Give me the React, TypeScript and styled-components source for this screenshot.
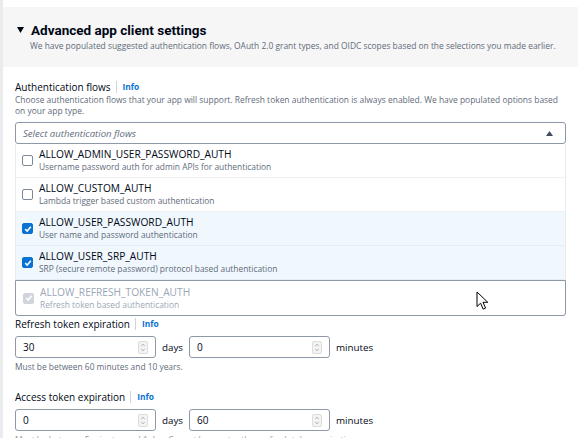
import React from "react";
import styled, { createGlobalStyle } from "styled-components";

const GlobalStyle = createGlobalStyle`
  body {
    margin: 0;
    background: #ffffff;
    font-family: "Open Sans", "Liberation Sans", sans-serif;
    color: #000716;
  }
`;

const Page = styled.div`
  position: relative;
  box-sizing: border-box;
  width: 578px;
  height: 438px;
  overflow: hidden;
  padding-top: 7px;
  border-left: 3px solid #e9ebed;
  background: #ffffff;
`;

const SectionHeader = styled.div`
  box-sizing: border-box;
  height: 60px;
  padding: 14px 0 0 14px;
  background: #f6f6f6;
`;

const HeaderTitle = styled.h2`
  display: flex;
  align-items: center;
  gap: 7px;
  margin: 0;
  font-family: Roboto, "Open Sans", sans-serif;
  font-size: 13.5px;
  line-height: 18px;
  font-weight: 700;
  color: #000716;
`;

const Caret = styled.svg`
  width: 7px;
  height: 6px;
  fill: #000716;
`;

const HeaderDescription = styled.p`
  margin: 1px 0 0 13px;
  font-size: 8.42px;
  line-height: 12px;
  color: #5f6b7a;
`;

const Body = styled.div`
  padding: 13px 12px 0 12px;
`;

const Label = styled.div<{ $gap?: number }>`
  display: flex;
  align-items: center;
  margin-top: ${(p) => p.$gap ?? 0}px;
  font-size: 10px;
  line-height: 14px;
  color: #000716;
`;

const Divider = styled.span`
  width: 1px;
  height: 12px;
  margin: 0 6px 0 5px;
  background: #d1d5db;
`;

const InfoLink = styled.a`
  font-size: 8.4px;
  font-weight: 700;
  color: #0972d3;
  text-decoration: none;
`;

const Description = styled.p`
  margin: 0;
  font-size: 8.45px;
  line-height: 11px;
  color: #5f6b7a;
`;

const Select = styled.div`
  box-sizing: border-box;
  display: flex;
  align-items: center;
  justify-content: space-between;
  height: 22px;
  margin-top: 6px;
  padding: 0 12px 0 7px;
  border: 1px solid #8d99a8;
  border-radius: 3px;
  font-size: 9.6px;
  font-style: italic;
  color: #5f6b7a;
`;

const UpArrow = styled.svg`
  width: 7px;
  height: 5px;
  fill: #414d5c;
`;

const OptionList = styled.ul`
  margin: 0;
  padding: 0;
  list-style: none;
  border: 1px solid #e9ebed;
  border-top: none;
  border-radius: 0 0 3px 3px;
`;

const Option = styled.li<{ $selected?: boolean; $disabled?: boolean }>`
  box-sizing: border-box;
  display: flex;
  align-items: center;
  gap: 6px;
  height: 34px;
  padding: 0 6px;
  border-bottom: 1px solid ${(p) => (p.$selected ? "#e3eef8" : "#eef0f1")};
  background: ${(p) => (p.$selected ? "#f0f8fe" : "#ffffff")};
  ${(p) =>
    p.$disabled &&
    `
    height: 36px;
    margin: 0 -1px -1px;
    padding-left: 7px;
    border: 1px solid #8d99a8;
    border-radius: 0 0 3px 3px;
  `}
`;

const Box = styled.span<{ $checked?: boolean; $disabled?: boolean }>`
  box-sizing: border-box;
  display: flex;
  align-items: center;
  justify-content: center;
  flex: none;
  width: 11px;
  height: 11px;
  border-radius: 2px;
  border: 1px solid
    ${(p) => (p.$disabled ? "#d1d5db" : p.$checked ? "#0972d3" : "#7d8998")};
  background: ${(p) => (p.$disabled ? "#d1d5db" : p.$checked ? "#0972d3" : "#ffffff")};
`;

const Tick = styled.svg`
  width: 8px;
  height: 8px;
  fill: none;
  stroke: #ffffff;
  stroke-width: 1.6;
`;

const OptionText = styled.div<{ $disabled?: boolean }>`
  display: flex;
  flex-direction: column;
  color: ${(p) => (p.$disabled ? "#9ba7b6" : "#000716")};
`;

const OptionTitle = styled.span`
  font-size: 10.2px;
  line-height: 13px;
`;

const OptionDesc = styled.span<{ $disabled?: boolean }>`
  font-size: 8.4px;
  line-height: 12px;
  color: ${(p) => (p.$disabled ? "#9ba7b6" : "#5f6b7a")};
`;

const InputRow = styled.div`
  display: flex;
  align-items: center;
  gap: 6px;
  margin-top: 5px;
`;

const NumberInput = styled.div`
  box-sizing: border-box;
  display: flex;
  align-items: center;
  justify-content: space-between;
  width: 141px;
  height: 22px;
  padding: 0 7px 0 7px;
  border: 1px solid #8d99a8;
  border-radius: 3px;
  font-size: 10px;
  color: #000716;
`;

const Unit = styled.span`
  font-size: 9.8px;
  color: #000716;
`;

const Hint = styled.p<{ $faded?: boolean }>`
  margin: 3px 0 0;
  font-size: 8.4px;
  line-height: 11px;
  color: #5f6b7a;
  opacity: ${(p) => (p.$faded ? 0.7 : 1)};
`;

const Pointer = styled.svg`
  position: absolute;
  left: 473px;
  top: 291px;
  width: 14px;
  height: 20px;
`;

const Spinner = () => (
  <svg width="10" height="13" viewBox="0 0 10 13">
    <rect x="0.5" y="0.5" width="9" height="12" rx="1.5" fill="#f4f4f4" stroke="#dcdcdc" />
    <path d="M3.2 5 L5 3.3 L6.8 5" fill="none" stroke="#9a9a9a" strokeWidth="0.8" />
    <path d="M3.2 8 L5 9.7 L6.8 8" fill="none" stroke="#9a9a9a" strokeWidth="0.8" />
  </svg>
);

const Checkbox = ({ checked, disabled }: { checked?: boolean; disabled?: boolean }) => (
  <Box $checked={checked} $disabled={disabled}>
    {checked && (
      <Tick viewBox="0 0 8 8">
        <path d="M1.2 4.2 L3.2 6 L6.8 1.8" />
      </Tick>
    )}
  </Box>
);

const flows = [
  { name: "ALLOW_ADMIN_USER_PASSWORD_AUTH", desc: "Username password auth for admin APIs for authentication" },
  { name: "ALLOW_CUSTOM_AUTH", desc: "Lambda trigger based custom authentication" },
  { name: "ALLOW_USER_PASSWORD_AUTH", desc: "User name and password authentication", checked: true },
  { name: "ALLOW_USER_SRP_AUTH", desc: "SRP (secure remote password) protocol based authentication", checked: true },
  { name: "ALLOW_REFRESH_TOKEN_AUTH", desc: "Refresh token based authentication", checked: true, disabled: true },
];

const App: React.FC = () => {
  return (
    <>
      <GlobalStyle />
      <Page>
        <SectionHeader>
          <HeaderTitle>
            <Caret viewBox="0 0 7 6">
              <path d="M0 0 H7 L3.5 6 Z" />
            </Caret>
            Advanced app client settings
          </HeaderTitle>
          <HeaderDescription>
            We have populated suggested authentication flows, OAuth 2.0 grant types, and OIDC scopes based on the
            selections you made earlier.
          </HeaderDescription>
        </SectionHeader>

        <Body>
          <Label>
            Authentication flows
            <Divider />
            <InfoLink>Info</InfoLink>
          </Label>
          <Description>
            Choose authentication flows that your app will support. Refresh token authentication is always enabled. We
            have populated options based on your app type.
          </Description>

          <Select>
            Select authentication flows
            <UpArrow viewBox="0 0 7 5">
              <path d="M0 5 L3.5 0 L7 5 Z" />
            </UpArrow>
          </Select>
          <OptionList>
            {flows.map((f) => (
              <Option key={f.name} $selected={f.checked && !f.disabled} $disabled={f.disabled}>
                <Checkbox checked={f.checked} disabled={f.disabled} />
                <OptionText $disabled={f.disabled}>
                  <OptionTitle>{f.name}</OptionTitle>
                  <OptionDesc $disabled={f.disabled}>{f.desc}</OptionDesc>
                </OptionText>
              </Option>
            ))}
          </OptionList>

          <Label $gap={1}>
            Refresh token expiration
            <Divider />
            <InfoLink>Info</InfoLink>
          </Label>
          <InputRow>
            <NumberInput>
              30
              <Spinner />
            </NumberInput>
            <Unit>days</Unit>
            <NumberInput>
              0
              <Spinner />
            </NumberInput>
            <Unit>minutes</Unit>
          </InputRow>
          <Hint>Must be between 60 minutes and 10 years.</Hint>

          <Label $gap={18}>
            Access token expiration
            <Divider />
            <InfoLink>Info</InfoLink>
          </Label>
          <InputRow>
            <NumberInput>
              0
              <Spinner />
            </NumberInput>
            <Unit>days</Unit>
            <NumberInput>
              60
              <Spinner />
            </NumberInput>
            <Unit>minutes</Unit>
          </InputRow>
          <Hint $faded>Must be between 5 minutes and 1 day. Cannot be greater than refresh token expiration.</Hint>
        </Body>

        <Pointer viewBox="0 0 14 20">
          <path
            d="M1 1 L1 15.5 L4.6 12.2 L7.2 18.2 L9.6 17.1 L7 11.3 L11.8 11.3 Z"
            fill="#ffffff"
            stroke="#000000"
            strokeWidth="1"
            strokeLinejoin="round"
          />
        </Pointer>
      </Page>
    </>
  );
};

export default App;
